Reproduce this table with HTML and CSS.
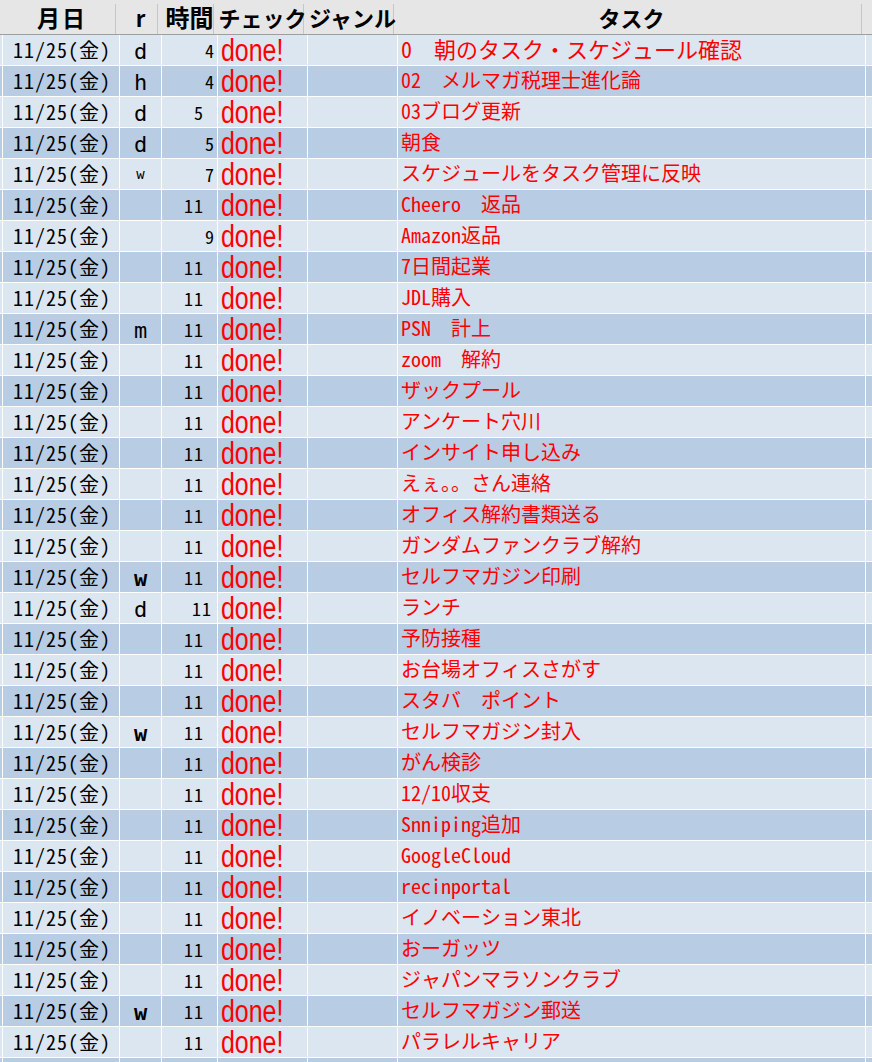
FILE: index.html
```html
<!DOCTYPE html>
<html lang="ja">
<head>
<meta charset="utf-8">
<title>タスク</title>
<link rel="stylesheet" href="styles.css">
</head>
<body>
<div class="sheet">
  <div class="head">
    <div class="hc h0"></div>
    <div class="hc wide">月日</div>
    <div class="hc">r</div>
    <div class="hc big">時間</div>
    <div class="hc">チェック</div>
    <div class="hc">ジャンル</div>
    <div class="hc">タスク</div>
    <div class="hc hg"></div>
  </div>
  <div class="body">
    <div class="row lt"><div class="c"></div><div class="c date">11/25(金)</div><div class="c r"><span>d</span></div><div class="c t">4</div><div class="c done"><span>done!</span></div><div class="c"></div><div class="c task big">0　朝のタスク・スケジュール確認</div><div class="c"></div></div>
    <div class="row dk"><div class="c"></div><div class="c date">11/25(金)</div><div class="c r"><span>h</span></div><div class="c t">4</div><div class="c done"><span>done!</span></div><div class="c"></div><div class="c task">02　メルマガ税理士進化論</div><div class="c"></div></div>
    <div class="row lt"><div class="c"></div><div class="c date">11/25(金)</div><div class="c r"><span>d</span></div><div class="c t m">5</div><div class="c done"><span>done!</span></div><div class="c"></div><div class="c task">03ブログ更新</div><div class="c"></div></div>
    <div class="row dk"><div class="c"></div><div class="c date">11/25(金)</div><div class="c r"><span>d</span></div><div class="c t">5</div><div class="c done"><span>done!</span></div><div class="c"></div><div class="c task">朝食</div><div class="c"></div></div>
    <div class="row lt"><div class="c"></div><div class="c date">11/25(金)</div><div class="c r sm"><span>w</span></div><div class="c t">7</div><div class="c done"><span>done!</span></div><div class="c"></div><div class="c task">スケジュールをタスク管理に反映</div><div class="c"></div></div>
    <div class="row dk"><div class="c"></div><div class="c date">11/25(金)</div><div class="c r"></div><div class="c t m">11</div><div class="c done"><span>done!</span></div><div class="c"></div><div class="c task">Cheero　返品</div><div class="c"></div></div>
    <div class="row lt"><div class="c"></div><div class="c date">11/25(金)</div><div class="c r"></div><div class="c t">9</div><div class="c done"><span>done!</span></div><div class="c"></div><div class="c task">Amazon返品</div><div class="c"></div></div>
    <div class="row dk"><div class="c"></div><div class="c date">11/25(金)</div><div class="c r"></div><div class="c t m">11</div><div class="c done"><span>done!</span></div><div class="c"></div><div class="c task">7日間起業</div><div class="c"></div></div>
    <div class="row lt"><div class="c"></div><div class="c date">11/25(金)</div><div class="c r"></div><div class="c t m">11</div><div class="c done"><span>done!</span></div><div class="c"></div><div class="c task">JDL購入</div><div class="c"></div></div>
    <div class="row dk"><div class="c"></div><div class="c date">11/25(金)</div><div class="c r"><span>m</span></div><div class="c t m">11</div><div class="c done"><span>done!</span></div><div class="c"></div><div class="c task">PSN　計上</div><div class="c"></div></div>
    <div class="row lt"><div class="c"></div><div class="c date">11/25(金)</div><div class="c r"></div><div class="c t m">11</div><div class="c done"><span>done!</span></div><div class="c"></div><div class="c task">zoom　解約</div><div class="c"></div></div>
    <div class="row dk"><div class="c"></div><div class="c date">11/25(金)</div><div class="c r"></div><div class="c t m">11</div><div class="c done"><span>done!</span></div><div class="c"></div><div class="c task">ザックプール</div><div class="c"></div></div>
    <div class="row lt"><div class="c"></div><div class="c date">11/25(金)</div><div class="c r"></div><div class="c t m">11</div><div class="c done"><span>done!</span></div><div class="c"></div><div class="c task">アンケート穴川</div><div class="c"></div></div>
    <div class="row dk"><div class="c"></div><div class="c date">11/25(金)</div><div class="c r"></div><div class="c t m">11</div><div class="c done"><span>done!</span></div><div class="c"></div><div class="c task">インサイト申し込み</div><div class="c"></div></div>
    <div class="row lt"><div class="c"></div><div class="c date">11/25(金)</div><div class="c r"></div><div class="c t m">11</div><div class="c done"><span>done!</span></div><div class="c"></div><div class="c task">えぇ。。さん連絡</div><div class="c"></div></div>
    <div class="row dk"><div class="c"></div><div class="c date">11/25(金)</div><div class="c r"></div><div class="c t m">11</div><div class="c done"><span>done!</span></div><div class="c"></div><div class="c task">オフィス解約書類送る</div><div class="c"></div></div>
    <div class="row lt"><div class="c"></div><div class="c date">11/25(金)</div><div class="c r"></div><div class="c t m">11</div><div class="c done"><span>done!</span></div><div class="c"></div><div class="c task">ガンダムファンクラブ解約</div><div class="c"></div></div>
    <div class="row dk"><div class="c"></div><div class="c date">11/25(金)</div><div class="c r bw"><span>w</span></div><div class="c t m">11</div><div class="c done"><span>done!</span></div><div class="c"></div><div class="c task">セルフマガジン印刷</div><div class="c"></div></div>
    <div class="row lt"><div class="c"></div><div class="c date">11/25(金)</div><div class="c r"><span>d</span></div><div class="c t x">11</div><div class="c done"><span>done!</span></div><div class="c"></div><div class="c task">ランチ</div><div class="c"></div></div>
    <div class="row dk"><div class="c"></div><div class="c date">11/25(金)</div><div class="c r"></div><div class="c t m">11</div><div class="c done"><span>done!</span></div><div class="c"></div><div class="c task">予防接種</div><div class="c"></div></div>
    <div class="row lt"><div class="c"></div><div class="c date">11/25(金)</div><div class="c r"></div><div class="c t m">11</div><div class="c done"><span>done!</span></div><div class="c"></div><div class="c task">お台場オフィスさがす</div><div class="c"></div></div>
    <div class="row dk"><div class="c"></div><div class="c date">11/25(金)</div><div class="c r"></div><div class="c t m">11</div><div class="c done"><span>done!</span></div><div class="c"></div><div class="c task">スタバ　ポイント</div><div class="c"></div></div>
    <div class="row lt"><div class="c"></div><div class="c date">11/25(金)</div><div class="c r bw"><span>w</span></div><div class="c t m">11</div><div class="c done"><span>done!</span></div><div class="c"></div><div class="c task">セルフマガジン封入</div><div class="c"></div></div>
    <div class="row dk"><div class="c"></div><div class="c date">11/25(金)</div><div class="c r"></div><div class="c t m">11</div><div class="c done"><span>done!</span></div><div class="c"></div><div class="c task">がん検診</div><div class="c"></div></div>
    <div class="row lt"><div class="c"></div><div class="c date">11/25(金)</div><div class="c r"></div><div class="c t m">11</div><div class="c done"><span>done!</span></div><div class="c"></div><div class="c task">12/10収支</div><div class="c"></div></div>
    <div class="row dk"><div class="c"></div><div class="c date">11/25(金)</div><div class="c r"></div><div class="c t m">11</div><div class="c done"><span>done!</span></div><div class="c"></div><div class="c task">Snniping追加</div><div class="c"></div></div>
    <div class="row lt"><div class="c"></div><div class="c date">11/25(金)</div><div class="c r"></div><div class="c t m">11</div><div class="c done"><span>done!</span></div><div class="c"></div><div class="c task">GoogleCloud</div><div class="c"></div></div>
    <div class="row dk"><div class="c"></div><div class="c date">11/25(金)</div><div class="c r"></div><div class="c t m">11</div><div class="c done"><span>done!</span></div><div class="c"></div><div class="c task">recinportal</div><div class="c"></div></div>
    <div class="row lt"><div class="c"></div><div class="c date">11/25(金)</div><div class="c r"></div><div class="c t m">11</div><div class="c done"><span>done!</span></div><div class="c"></div><div class="c task">イノベーション東北</div><div class="c"></div></div>
    <div class="row dk"><div class="c"></div><div class="c date">11/25(金)</div><div class="c r"></div><div class="c t m">11</div><div class="c done"><span>done!</span></div><div class="c"></div><div class="c task">おーガッツ</div><div class="c"></div></div>
    <div class="row lt"><div class="c"></div><div class="c date">11/25(金)</div><div class="c r"></div><div class="c t m">11</div><div class="c done"><span>done!</span></div><div class="c"></div><div class="c task">ジャパンマラソンクラブ</div><div class="c"></div></div>
    <div class="row dk"><div class="c"></div><div class="c date">11/25(金)</div><div class="c r bw"><span>w</span></div><div class="c t m">11</div><div class="c done"><span>done!</span></div><div class="c"></div><div class="c task">セルフマガジン郵送</div><div class="c"></div></div>
    <div class="row lt"><div class="c"></div><div class="c date">11/25(金)</div><div class="c r"></div><div class="c t m">11</div><div class="c done"><span>done!</span></div><div class="c"></div><div class="c task">パラレルキャリア</div><div class="c"></div></div>
    <div class="row dk"><div class="c"></div><div class="c"></div><div class="c"></div><div class="c"></div><div class="c"></div><div class="c"></div><div class="c"></div><div class="c"></div></div>
  </div>
</div>
</body>
</html>
```

FILE: styles.css
```css
* {
  box-sizing: border-box;
}

html, body {
  margin: 0;
  padding: 0;
  background: #ffffff;
}

body {
  width: 872px;
  height: 1062px;
  overflow: hidden;
  font-family: "Noto Sans Mono CJK JP", "Noto Sans CJK JP", monospace;
}

.sheet {
  width: 872px;
}

.head {
  display: grid;
  grid-template-columns: 3px 117px 42px 56px 90px 90px 468px 6px;
  height: 35px;
  background: #e6e6e6;
  border-bottom: 1px solid #9e9e9e;
}

.hc {
  background: linear-gradient(#c6c6c6, #c6c6c6) right 4px top 4px / 1px 30px no-repeat;
  text-align: center;
  padding-right: 1px;
  font-family: "Noto Sans CJK JP", sans-serif;
  font-weight: 700;
  font-size: 22px;
  line-height: 34px;
  color: #000;
  white-space: nowrap;
  overflow: hidden;
}

.hc.wide {
  font-size: 23px;
  letter-spacing: 2px;
  text-indent: 2px;
}

.hc.big {
  font-size: 24px;
}

.hc.h0,
.hc.hg {
  background: none;
}

.body {
  display: flex;
  flex-direction: column;
  row-gap: 1px;
}

.row {
  display: grid;
  grid-template-columns: 2px 116px 41px 55px 89px 89px 467px 6px;
  column-gap: 1px;
  height: 30px;
}

.c {
  height: 30px;
  white-space: nowrap;
}

.lt .c {
  background: #dce6f1;
}

.dk .c {
  background: #b8cce4;
}

.date {
  font-size: 20px;
  letter-spacing: 1px;
  line-height: 29px;
  text-align: center;
  padding-left: 2px;
  color: #000;
}

.r {
  display: flex;
  justify-content: center;
  align-items: flex-start;
  padding-top: 4px;
  font-family: "DejaVu Sans Mono", "Liberation Mono", monospace;
  font-size: 22px;
  color: #000;
}

.r span {
  display: inline-block;
  line-height: 26px;
}

.r.sm {
  font-size: 14px;
  padding-top: 7px;
}

.r.sm span {
  line-height: 17px;
}

.r.bw {
  font-weight: 700;
}

.t {
  font-size: 18px;
  letter-spacing: 1px;
  line-height: 28px;
  padding-top: 1px;
  text-align: right;
  padding-right: 2px;
  color: #000;
}

.t.m {
  padding-right: 13px;
}

.t.x {
  padding-right: 5px;
}

.done {
  padding-left: 3px;
  padding-top: 2px;
  color: #ff0000;
  font-family: "Liberation Sans", Arial, sans-serif;
  font-size: 26.5px;
}

.done span {
  display: inline-block;
  line-height: 26px;
  transform: scale(0.94, 1.17);
  transform-origin: 0 24px;
}

.task {
  padding-left: 3px;
  color: #ff0000;
  font-size: 20px;
  line-height: 28px;
}

.task.big {
  font-size: 22px;
  line-height: 26px;
}
```
